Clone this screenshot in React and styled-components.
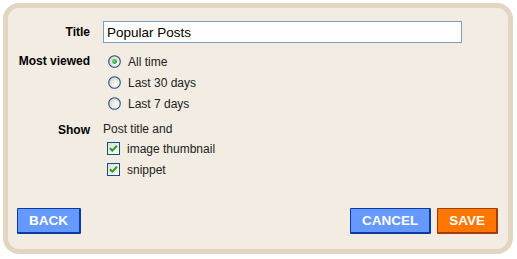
import React from "react";
import styled, { createGlobalStyle } from "styled-components";

const Global = createGlobalStyle`
  html, body { margin: 0; padding: 0; background: #ffffff; }
  body { font-family: "Liberation Sans", Arial, sans-serif; }
`;

const Frame = styled.div`
  margin: 3px 0 0 3px;
  width: 510px;
  height: 251px;
  box-sizing: border-box;
  border: 5px solid #e2d5c2;
  border-radius: 16px;
  background: #f3ece3;
  display: flex;
  flex-direction: column;
  padding: 13px 10px 15px 9px;
`;

const Form = styled.div`
  display: grid;
  grid-template-columns: 73px 1fr;
  column-gap: 13px;
  row-gap: 0;
  align-items: start;
`;

const Label = styled.div`
  font-weight: bold;
  font-size: 12px;
  color: #000;
  text-align: right;
  height: ${(p) => p.$h || 21}px;
  line-height: ${(p) => p.$h || 21}px;
  margin-top: ${(p) => p.$mt || 0}px;
`;

const Input = styled.input`
  width: 359px;
  height: 22px;
  box-sizing: border-box;
  border: 1px solid #7f9db9;
  background: #fff;
  padding: 0 3px;
  font-family: "Liberation Sans", Arial, sans-serif;
  font-size: 13.5px;
  color: #000;
  outline: none;
`;

const Options = styled.div`
  display: flex;
  flex-direction: column;
  margin-top: ${(p) => p.$mt || 0}px;
`;

const Option = styled.label`
  display: flex;
  align-items: center;
  gap: 7px;
  height: ${(p) => p.$h || 21}px;
  padding-left: ${(p) => p.$indent || 0}px;
  font-size: 12px;
  color: #222;
`;

const Plain = styled.div`
  height: 17px;
  line-height: 17px;
  font-size: 12px;
  color: #222;
`;

const Buttons = styled.div`
  margin-top: auto;
  display: flex;
  align-items: center;
  gap: 6px;
`;

const Spacer = styled.div`
  flex: 1;
`;

const Button = styled.button`
  height: 26px;
  padding: 0 11px;
  box-sizing: border-box;
  font-family: "Liberation Sans", Arial, sans-serif;
  font-weight: bold;
  font-size: 13.5px;
  color: #fff;
  text-transform: uppercase;
  background: ${(p) => (p.$variant === "save" ? "#ff7700" : "#6699ff")};
  border: 1px solid ${(p) => (p.$variant === "save" ? "#a03d00" : "#0c3b9c")};
  border-right-width: 2px;
  border-bottom-width: 2px;
  border-radius: 1px;
  cursor: pointer;
`;

const Radio = ({ checked }) => (
  <svg width="13" height="13" viewBox="0 0 13 13">
    <defs>
      <radialGradient id="rg" cx="0.65" cy="0.65" r="0.7">
        <stop offset="0" stopColor="#ffffff" />
        <stop offset="1" stopColor="#d6d3c8" />
      </radialGradient>
      <radialGradient id="dot" cx="0.4" cy="0.4" r="0.6">
        <stop offset="0" stopColor="#7ee07e" />
        <stop offset="1" stopColor="#1f9a1f" />
      </radialGradient>
    </defs>
    <circle cx="6.5" cy="6.5" r="5.8" fill="url(#rg)" stroke="#21527e" strokeWidth="1.1" />
    {checked && <circle cx="6.5" cy="6.5" r="2.4" fill="url(#dot)" />}
  </svg>
);

const Check = () => (
  <svg width="13" height="13" viewBox="0 0 13 13">
    <defs>
      <linearGradient id="cg" x1="0" y1="0" x2="1" y2="1">
        <stop offset="0" stopColor="#dcdcd4" />
        <stop offset="1" stopColor="#ffffff" />
      </linearGradient>
    </defs>
    <rect x="0.5" y="0.5" width="12" height="12" fill="url(#cg)" stroke="#1d4f7c" />
    <path d="M3 6.2 L5.3 8.6 L10 3.8" fill="none" stroke="#21a121" strokeWidth="2" />
  </svg>
);

export default function App() {
  return (
    <>
      <Global />
      <Frame>
        <Form>
          <Label $h={22}>Title</Label>
          <Input defaultValue="Popular Posts" />

          <Label $mt={8}>Most viewed</Label>
          <Options $mt={8}>
            <Option $indent={5}>
              <Radio checked />
              All time
            </Option>
            <Option $indent={5}>
              <Radio />
              Last 30 days
            </Option>
            <Option $indent={5}>
              <Radio />
              Last 7 days
            </Option>
          </Options>

          <Label $mt={7} $h={18}>Show</Label>
          <Options $mt={7}>
            <Plain>Post title and</Plain>
            <Option $indent={4}>
              <Check />
              image thumbnail
            </Option>
            <Option $indent={4}>
              <Check />
              snippet
            </Option>
          </Options>
        </Form>

        <Buttons>
          <Button>Back</Button>
          <Spacer />
          <Button>Cancel</Button>
          <Button $variant="save">Save</Button>
        </Buttons>
      </Frame>
    </>
  );
}
